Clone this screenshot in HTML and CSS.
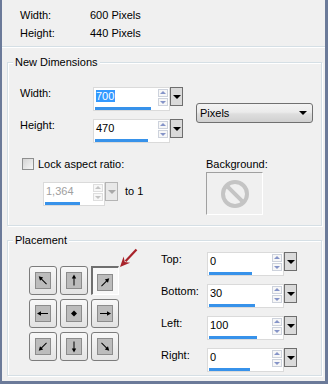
FILE: index.html
```html
<!DOCTYPE html>
<html lang="en">
<head>
    <meta charset="UTF-8">
    <title>Canvas Size</title>
    <link rel="stylesheet" href="styles.css">
</head>
<body>
<div class="window">

    <!-- Current size -->
    <div class="info">
        <div class="info-row"><span class="info-label">Width:</span><span>600 Pixels</span></div>
        <div class="info-row"><span class="info-label">Height:</span><span>440 Pixels</span></div>
    </div>
    <div class="separator"></div>

    <!-- New Dimensions -->
    <div class="group dims-group">
        <span class="group-title">New Dimensions</span>
        <div class="dims">
            <div class="dim-fields">
                <div class="field-row">
                    <span class="field-label">Width:</span>
                    <div class="spin">
                        <div class="spin-field">
                            <div class="spin-top">
                                <span class="spin-value"><span class="selected">700</span></span>
                                <div class="spin-btns"><span class="up"></span><span class="down"></span></div>
                            </div>
                            <div class="spin-bar" style="width: 56px"></div>
                        </div>
                        <div class="spin-drop"></div>
                    </div>
                </div>
                <div class="field-row">
                    <span class="field-label">Height:</span>
                    <div class="spin">
                        <div class="spin-field">
                            <div class="spin-top">
                                <span class="spin-value">470</span>
                                <div class="spin-btns"><span class="up"></span><span class="down"></span></div>
                            </div>
                            <div class="spin-bar" style="width: 53px"></div>
                        </div>
                        <div class="spin-drop"></div>
                    </div>
                </div>
            </div>
            <div class="combo"><span>Pixels</span><span class="combo-arrow"></span></div>
        </div>

        <div class="lower">
            <div class="lock-col">
                <div class="check-row">
                    <span class="checkbox"></span>
                    <span class="check-label">Lock aspect ratio:</span>
                </div>
                <div class="ratio-row">
                    <div class="spin disabled">
                        <div class="spin-field ratio-field">
                            <div class="spin-top">
                                <span class="spin-value">1,364</span>
                                <div class="spin-btns"><span class="up"></span><span class="down"></span></div>
                            </div>
                            <div class="spin-bar" style="width: 35px"></div>
                        </div>
                        <div class="spin-drop"></div>
                    </div>
                    <span class="ratio-to">to 1</span>
                </div>
            </div>
            <div class="bg-col">
                <span class="bg-label">Background:</span>
                <div class="bg-swatch">
                    <svg width="30" height="30" viewBox="0 0 30 30">
                        <circle cx="15" cy="15" r="12" fill="none" stroke="#c4c4c4" stroke-width="4"/>
                        <line x1="6.8" y1="6.8" x2="23.2" y2="23.2" stroke="#c4c4c4" stroke-width="4"/>
                    </svg>
                </div>
            </div>
        </div>
    </div>

    <!-- Placement -->
    <div class="group place-group">
        <span class="group-title">Placement</span>
        <svg class="hint-arrow" width="26" height="26" viewBox="0 0 26 26">
            <line x1="20.5" y1="2.5" x2="9.5" y2="14.2" stroke="#a8232b" stroke-width="2.2"/>
            <polygon points="4,20 7.6,9.6 8.8,14.9 14.1,15.8" fill="#a8232b"/>
        </svg>
        <div class="place">
            <div class="pad-grid">
                <div class="pad"><span class="pad-face"><svg viewBox="0 0 14 15"><g transform="rotate(-45 7 7.5)"><path d="M7 12.5V4" stroke="#000"/><path d="M7 1.5L4.8 5.5H9.2Z"/></g></svg></span></div>
                <div class="pad"><span class="pad-face"><svg viewBox="0 0 14 15"><g><path d="M7 12.5V4" stroke="#000"/><path d="M7 1.5L4.8 5.5H9.2Z"/></g></svg></span></div>
                <div class="pad active"><span class="pad-face"><svg viewBox="0 0 14 15"><g transform="rotate(45 7 7.5)"><path d="M7 12.5V4" stroke="#000"/><path d="M7 1.5L4.8 5.5H9.2Z"/></g></svg></span></div>
                <div class="pad"><span class="pad-face"><svg viewBox="0 0 14 15"><g transform="rotate(-90 7 7.5)"><path d="M7 12.5V4" stroke="#000"/><path d="M7 1.5L4.8 5.5H9.2Z"/></g></svg></span></div>
                <div class="pad"><span class="pad-face"><svg viewBox="0 0 14 15"><path d="M7 4.5L10 7.5L7 10.5L4 7.5Z"/></svg></span></div>
                <div class="pad"><span class="pad-face"><svg viewBox="0 0 14 15"><g transform="rotate(90 7 7.5)"><path d="M7 12.5V4" stroke="#000"/><path d="M7 1.5L4.8 5.5H9.2Z"/></g></svg></span></div>
                <div class="pad"><span class="pad-face"><svg viewBox="0 0 14 15"><g transform="rotate(-135 7 7.5)"><path d="M7 12.5V4" stroke="#000"/><path d="M7 1.5L4.8 5.5H9.2Z"/></g></svg></span></div>
                <div class="pad"><span class="pad-face"><svg viewBox="0 0 14 15"><g transform="rotate(180 7 7.5)"><path d="M7 12.5V4" stroke="#000"/><path d="M7 1.5L4.8 5.5H9.2Z"/></g></svg></span></div>
                <div class="pad"><span class="pad-face"><svg viewBox="0 0 14 15"><g transform="rotate(135 7 7.5)"><path d="M7 12.5V4" stroke="#000"/><path d="M7 1.5L4.8 5.5H9.2Z"/></g></svg></span></div>
            </div>

            <div class="pad-fields">
                <div class="field-row">
                    <span class="field-label short">Top:</span>
                    <div class="spin">
                        <div class="spin-field">
                            <div class="spin-top">
                                <span class="spin-value">0</span>
                                <div class="spin-btns"><span class="up"></span><span class="down"></span></div>
                            </div>
                            <div class="spin-bar" style="width: 43px"></div>
                        </div>
                        <div class="spin-drop"></div>
                    </div>
                </div>
                <div class="field-row">
                    <span class="field-label short">Bottom:</span>
                    <div class="spin">
                        <div class="spin-field">
                            <div class="spin-top">
                                <span class="spin-value">30</span>
                                <div class="spin-btns"><span class="up"></span><span class="down"></span></div>
                            </div>
                            <div class="spin-bar" style="width: 46px"></div>
                        </div>
                        <div class="spin-drop"></div>
                    </div>
                </div>
                <div class="field-row">
                    <span class="field-label short">Left:</span>
                    <div class="spin">
                        <div class="spin-field">
                            <div class="spin-top">
                                <span class="spin-value">100</span>
                                <div class="spin-btns"><span class="up"></span><span class="down"></span></div>
                            </div>
                            <div class="spin-bar" style="width: 48px"></div>
                        </div>
                        <div class="spin-drop"></div>
                    </div>
                </div>
                <div class="field-row">
                    <span class="field-label short">Right:</span>
                    <div class="spin">
                        <div class="spin-field">
                            <div class="spin-top">
                                <span class="spin-value">0</span>
                                <div class="spin-btns"><span class="up"></span><span class="down"></span></div>
                            </div>
                            <div class="spin-bar" style="width: 41px"></div>
                        </div>
                        <div class="spin-drop"></div>
                    </div>
                </div>
            </div>
        </div>
    </div>

</div>
</body>
</html>
```

FILE: styles.css
```css
/* Dialog frame */
body {
    margin: 0;
    background-color: #f0f0f0;
}

.window {
    position: relative;
    width: 328px;
    height: 384px;
    box-sizing: border-box;
    border-left: 2px solid #6b7a99;
    border-right: 3px solid #6b7a99;
    border-bottom: 3px solid #6b7a99;
    background-color: #f0f0f0;
    font-family: "Liberation Sans", Arial, sans-serif;
    font-size: 11px;
    color: #000;
}

/* Current size */
.info {
    padding: 6px 0 0 18px;
}

.info-row {
    display: flex;
    line-height: 18px;
}

.info-label {
    width: 70px;
}

.separator {
    margin-top: 4px;
    height: 1px;
    background-color: #d5dfe5;
    border-bottom: 1px solid #fff;
}

/* Group boxes */
.group {
    position: relative;
    margin: 14px 3px 0 5px;
    border: 1px solid #d5dfe5;
    box-shadow: inset 1px 1px 0 #fff, 1px 1px 0 #fff;
}

.group-title {
    position: absolute;
    top: -7px;
    left: 5px;
    padding: 0 2px;
    line-height: 13px;
    background-color: #f0f0f0;
}

.dims-group {
    padding: 24px 0 10px 12px;
}

.dims {
    display: flex;
    align-items: flex-start;
}

.dim-fields,
.pad-fields {
    display: flex;
    flex-direction: column;
    gap: 8px;
}

.field-row {
    display: flex;
    align-items: flex-start;
}

.field-label {
    width: 73px;
    line-height: 13px;
}

.field-label.short {
    width: 46px;
    padding-top: 1px;
}

/* Spin control with slider bar */
.spin {
    display: flex;
    align-items: flex-start;
}

.spin-field {
    width: 77px;
    height: 24px;
    box-sizing: border-box;
    border: 1px solid #dadada;
    background-color: #fff;
    padding: 1px 0 0 1px;
    display: flex;
    flex-direction: column;
}

.ratio-field {
    width: 62px;
}

.spin-top {
    display: flex;
    height: 17px;
}

.spin-value {
    flex: 1;
    line-height: 14px;
    padding-left: 1px;
}

.selected {
    background-color: #3399ff;
    color: #fff;
    padding: 0 1px 0 0;
}

.spin-btns {
    width: 10px;
    margin-right: 1px;
    display: flex;
    flex-direction: column;
    gap: 1px;
}

.spin-btns span {
    position: relative;
    height: 8px;
    box-sizing: border-box;
    border: 1px solid #cdd2dc;
    background-color: #f7f7f7;
}

.spin-btns span::after {
    content: "";
    position: absolute;
    left: 1px;
    border-left: 3px solid transparent;
    border-right: 3px solid transparent;
}

.spin-btns .up::after {
    top: 1px;
    border-bottom: 3px solid #8594c8;
}

.spin-btns .down::after {
    top: 2px;
    border-top: 3px solid #8594c8;
}

.spin-bar {
    height: 3px;
    margin-top: 1px;
    background-color: #3792ea;
}

.spin-drop {
    width: 13px;
    height: 19px;
    box-sizing: border-box;
    border: 1px solid #6e6e6e;
    background-color: #dadada;
    display: flex;
    align-items: center;
    justify-content: center;
}

.spin-drop::after {
    content: "";
    border-left: 4px solid transparent;
    border-right: 4px solid transparent;
    border-top: 4px solid #000;
}

.disabled .spin-value { color: #a0a0a0; }
.disabled .spin-btns span { border-color: #dedede; }
.disabled .spin-btns .up::after { border-bottom-color: #c4c4c4; }
.disabled .spin-btns .down::after { border-top-color: #c4c4c4; }
.disabled .spin-drop { border-color: #b4b4b4; background-color: #e8e8e8; }
.disabled .spin-drop::after { border-top-color: #a8a8a8; }

/* Units combo */
.combo {
    width: 117px;
    height: 20px;
    box-sizing: border-box;
    margin: 16px 0 0 13px;
    padding: 0 5px 0 3px;
    border: 1px solid #707070;
    border-radius: 3px;
    background: linear-gradient(#f3f3f3, #ebebeb 45%, #dedede 55%, #d0d0d0);
    display: flex;
    align-items: center;
    justify-content: space-between;
}

.combo-arrow {
    border-left: 4px solid transparent;
    border-right: 4px solid transparent;
    border-top: 4px solid #000;
}

/* Lock ratio + background */
.lower {
    display: flex;
    margin-top: 15px;
}

.lock-col {
    width: 186px;
}

.check-row {
    display: flex;
    align-items: center;
    height: 12px;
    padding-left: 2px;
}

.checkbox {
    width: 12px;
    height: 12px;
    box-sizing: border-box;
    border: 1px solid #8e8f8f;
    background: linear-gradient(135deg, #d4d4d4, #f6f6f6);
}

.check-label {
    margin-left: 4px;
    line-height: 12px;
}

.ratio-row {
    display: flex;
    align-items: flex-start;
    margin: 12px 0 0 23px;
}

.ratio-to {
    margin: 3px 0 0 7px;
    line-height: 13px;
}

.bg-label {
    display: block;
    line-height: 12px;
}

.bg-swatch {
    width: 57px;
    height: 43px;
    box-sizing: border-box;
    margin-top: 2px;
    border-top: 1px solid #a0a0a0;
    border-left: 1px solid #a0a0a0;
    border-right: 1px solid #fff;
    border-bottom: 1px solid #fff;
    display: flex;
    align-items: center;
    justify-content: center;
}

.bg-swatch svg {
    display: block;
}

/* Placement */
.place-group {
    padding: 11px 0 3px 21px;
}

.place {
    display: flex;
    align-items: flex-start;
}

.pad-grid {
    margin-top: 14px;
    display: grid;
    grid-template-columns: repeat(3, 28px);
    grid-auto-rows: 29px;
    column-gap: 3px;
    row-gap: 4px;
}

.pad {
    box-sizing: border-box;
    border: 1px solid #7c7c7c;
    border-radius: 3px;
    background: linear-gradient(#f8f8f8, #e3e3e3);
    display: flex;
    align-items: center;
    justify-content: center;
}

.pad.active {
    border-radius: 0;
    border-top: 2px solid #6f6f6f;
    border-left: 2px solid #6f6f6f;
    border-right: 1px solid #fff;
    border-bottom: 1px solid #fff;
    background: #f8f8f8;
    align-items: flex-start;
    justify-content: flex-start;
    padding: 6px 0 0 4px;
}

.pad-face {
    width: 16px;
    height: 17px;
    box-sizing: border-box;
    border: 1px solid #8c8c8c;
    background-color: #bcbcbc;
}

.pad-face svg {
    display: block;
    width: 14px;
    height: 15px;
}

.pad-fields {
    margin-left: 42px;
}

.hint-arrow {
    position: absolute;
    left: 108px;
    top: 6px;
}
```
